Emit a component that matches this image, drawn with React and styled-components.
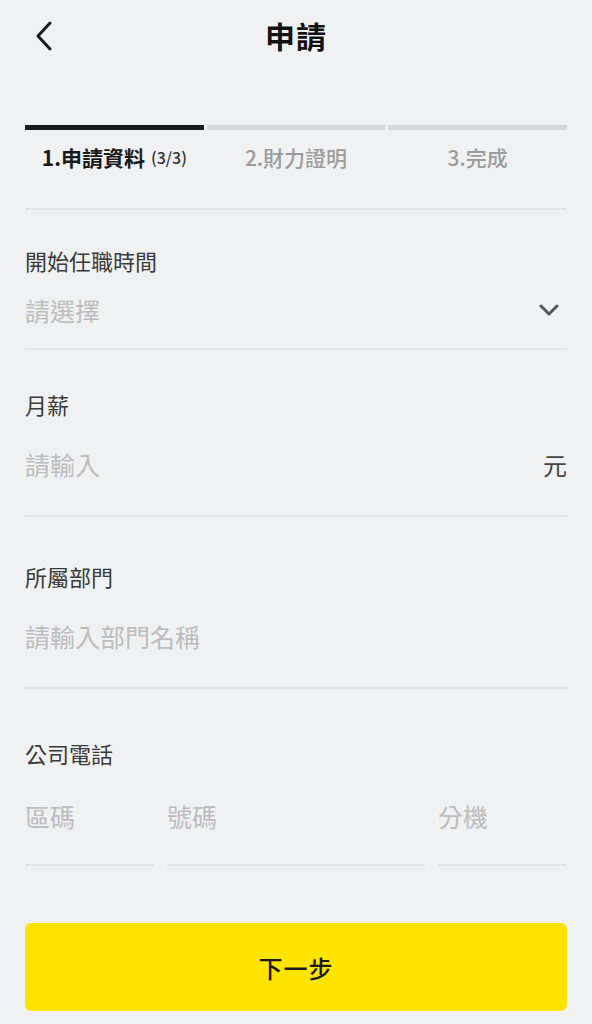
import React from "react";
import styled, { createGlobalStyle } from "styled-components";

const GlobalStyle = createGlobalStyle`
  html, body {
    margin: 0;
    padding: 0;
    background: #f0f1f3;
  }
  body {
    font-family: "Noto Sans CJK TC", "Noto Sans", sans-serif;
    -webkit-font-smoothing: antialiased;
  }
`;

const steps = [
  { label: "1.申請資料", sub: "(3/3)", active: true },
  { label: "2.財力證明" },
  { label: "3.完成" },
];

export default function App() {
  return (
    <Page>
      <GlobalStyle />
      <Header>
        <BackButton aria-label="返回">
          <svg width="20" height="30" viewBox="0 0 20 30" fill="none">
            <polyline
              points="16,2 4,15 16,28"
              stroke="#1c1c1c"
              strokeWidth="3"
              strokeLinecap="round"
              strokeLinejoin="round"
            />
          </svg>
        </BackButton>
        <Title>申請</Title>
      </Header>

      <Steps>
        {steps.map((s) => (
          <Step key={s.label}>
            <StepBar $active={s.active} />
            <StepLabel $active={s.active}>
              {s.label}
              {s.sub && <StepSub>{s.sub}</StepSub>}
            </StepLabel>
          </Step>
        ))}
      </Steps>

      <Form>
        <ClippedField />

        <Field $top={37} $bottom={13}>
          <Label>開始任職時間</Label>
          <ValueRow $height={50} $gap={12}>
            <Placeholder>請選擇</Placeholder>
            <svg width="20" height="12" viewBox="0 0 20 12" fill="none">
              <polyline
                points="2,2 10,10 18,2"
                stroke="#555"
                strokeWidth="3"
                strokeLinecap="round"
                strokeLinejoin="round"
              />
            </svg>
          </ValueRow>
        </Field>

        <Field $top={41} $bottom={21}>
          <Label>月薪</Label>
          <ValueRow $height={60} $gap={17}>
            <Placeholder>請輸入</Placeholder>
            <Unit>元</Unit>
          </ValueRow>
        </Field>

        <Field $top={46} $bottom={21}>
          <Label>所屬部門</Label>
          <ValueRow $height={60} $gap={17}>
            <Placeholder>請輸入部門名稱</Placeholder>
          </ValueRow>
        </Field>

        <PhoneField>
          <Label>公司電話</Label>
          <PhoneRow>
            <PhoneCell>
              <Placeholder>區碼</Placeholder>
            </PhoneCell>
            <PhoneCell>
              <Placeholder>號碼</Placeholder>
            </PhoneCell>
            <PhoneCell>
              <Placeholder>分機</Placeholder>
            </PhoneCell>
          </PhoneRow>
        </PhoneField>

        <NextButton>下一步</NextButton>
      </Form>
    </Page>
  );
}

const Page = styled.div`
  width: 592px;
  min-height: 1024px;
  background: #f0f1f3;
  overflow: hidden;
`;

const Header = styled.div`
  position: relative;
  height: 70px;
  display: flex;
  align-items: center;
  justify-content: center;
`;

const BackButton = styled.button`
  position: absolute;
  left: 30px;
  top: 21px;
  border: none;
  background: none;
  padding: 0 4px;
  display: flex;
  cursor: pointer;
`;

const Title = styled.h1`
  margin: 0;
  font-size: 30px;
  font-weight: 700;
  color: #111;
  letter-spacing: 1px;
`;

const Steps = styled.div`
  margin: 55px 25px 0;
  display: grid;
  grid-template-columns: repeat(3, 1fr);
  column-gap: 3px;
`;

const Step = styled.div`
  display: flex;
  flex-direction: column;
`;

const StepBar = styled.div`
  height: 5px;
  background: ${(p) => (p.$active ? "#1b1b1b" : "#d6d7d9")};
`;

const StepLabel = styled.div`
  height: 54px;
  display: flex;
  align-items: center;
  justify-content: center;
  font-size: 21px;
  font-weight: ${(p) => (p.$active ? 700 : 500)};
  color: ${(p) => (p.$active ? "#1a1a1a" : "#9b9b9b")};
`;

const StepSub = styled.span`
  margin-left: 6px;
  font-size: 16px;
  font-weight: 500;
  color: #333;
`;

const Form = styled.div`
  padding: 0 25px;
  display: flex;
  flex-direction: column;
`;

const ClippedField = styled.div`
  height: 24px;
  border-bottom: 2px solid #e3e4e6;
`;

const Field = styled.div`
  padding: ${(p) => p.$top}px 0 ${(p) => p.$bottom}px;
  border-bottom: 2px solid #e3e4e6;
`;

const Label = styled.div`
  font-size: 22px;
  line-height: 26px;
  color: #3a3a3a;
`;

const ValueRow = styled.div`
  height: ${(p) => p.$height}px;
  margin-top: ${(p) => p.$gap}px;
  display: flex;
  align-items: center;
  justify-content: space-between;
  padding-right: 8px;
`;

const Placeholder = styled.span`
  font-size: 25px;
  color: #bcbcbe;
`;

const Unit = styled.span`
  font-size: 24px;
  color: #444;
  margin-right: -8px;
`;

const PhoneField = styled.div`
  padding-top: 51px;
`;

const PhoneRow = styled.div`
  margin-top: 20px;
  display: grid;
  grid-template-columns: 129px 1fr 129px;
  column-gap: 13px;
`;

const PhoneCell = styled.div`
  height: 60px;
  padding-bottom: 18px;
  display: flex;
  align-items: center;
  border-bottom: 2px solid #e3e4e6;
`;

const NextButton = styled.button`
  margin-top: 57px;
  height: 88px;
  border: none;
  border-radius: 6px;
  background: #ffe400;
  font-family: inherit;
  font-size: 24px;
  font-weight: 500;
  color: #1a1a1a;
  letter-spacing: 1px;
  cursor: pointer;
`;
